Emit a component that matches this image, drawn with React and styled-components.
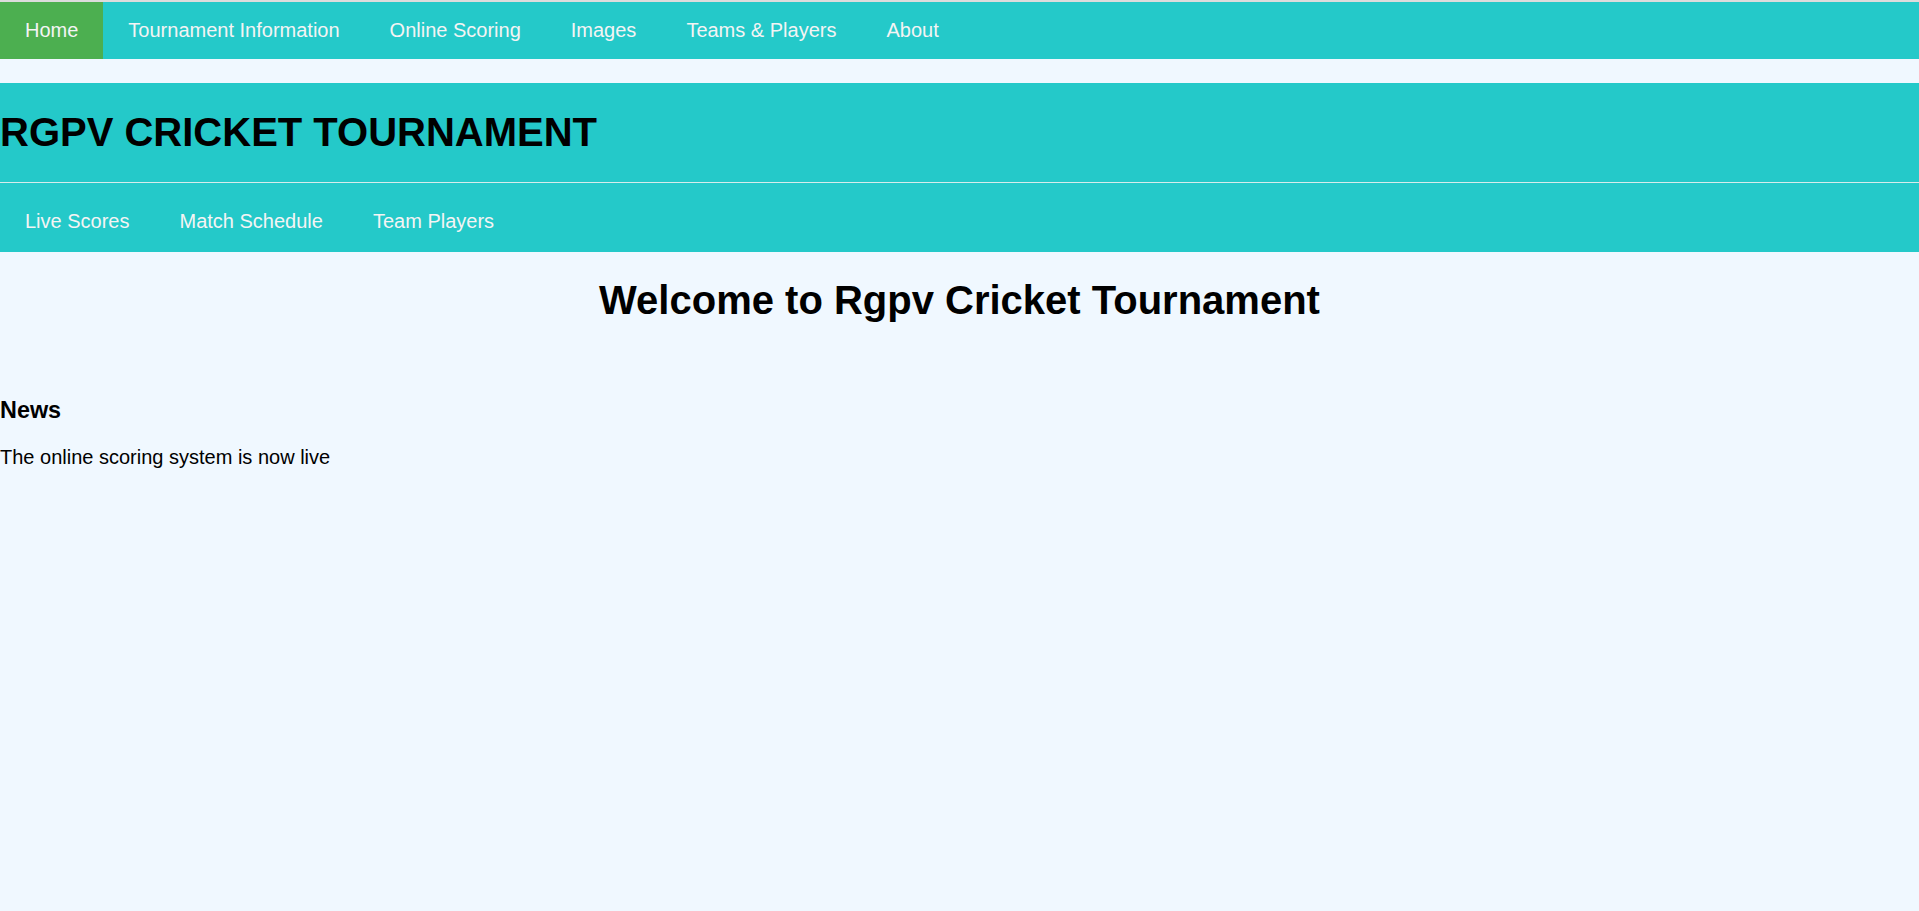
import styled, { createGlobalStyle } from "styled-components";

const GlobalStyle = createGlobalStyle`
  html, body {
    margin: 0;
    padding: 0;
    background: #f0f8ff;
    font-family: "Liberation Sans", Arial, sans-serif;
    font-size: 20px;
    color: #000;
  }
`;

const TEAL = "#24c9c9";

const Page = styled.div`
  min-height: 911px;
  border-top: 2px solid #dcdcdc;
  background: #f0f8ff;
`;

const TopNav = styled.nav`
  display: flex;
  background: ${TEAL};
`;

const NavLink = styled.a`
  display: block;
  padding: 16px 25px 17px;
  line-height: 24px;
  font-size: 20px;
  color: #f4f4f4;
  text-decoration: none;
  background: ${(p) => (p.$active ? "#4caf50" : "transparent")};
  cursor: pointer;
  &:hover {
    background: ${(p) => (p.$active ? "#4caf50" : "#1fb5b5")};
  }
`;

const Header = styled.header`
  margin-top: 24px;
  background: ${TEAL};
`;

const TitleBand = styled.div`
  padding: 26px 0 27px;
  border-bottom: 1px solid #d6ecec;
`;

const Title = styled.h1`
  margin: 0;
  font-size: 40px;
  line-height: 46px;
  font-weight: 700;
`;

const SubNav = styled.nav`
  display: flex;
  padding: 10px 0 2px;
`;

const Welcome = styled.h2`
  margin: 24px 0 0;
  text-align: center;
  font-size: 40px;
  line-height: 48px;
  font-weight: 700;
`;

const News = styled.section`
  margin-top: 73px;
`;

const NewsTitle = styled.h3`
  margin: 0;
  font-size: 23.4px;
  line-height: 27px;
  font-weight: 700;
`;

const NewsText = styled.p`
  margin: 22px 0 0;
  font-size: 20px;
  line-height: 23px;
`;

const topLinks = [
  "Home",
  "Tournament Information",
  "Online Scoring",
  "Images",
  "Teams & Players",
  "About",
];

const subLinks = ["Live Scores", "Match Schedule", "Team Players"];

export default function App() {
  return (
    <>
      <GlobalStyle />
      <Page>
        <TopNav>
          {topLinks.map((l, i) => (
            <NavLink key={l} $active={i === 0}>
              {l}
            </NavLink>
          ))}
        </TopNav>

        <Header>
          <TitleBand>
            <Title>RGPV CRICKET TOURNAMENT</Title>
          </TitleBand>
          <SubNav>
            {subLinks.map((l) => (
              <NavLink key={l}>{l}</NavLink>
            ))}
          </SubNav>
        </Header>

        <Welcome>Welcome to Rgpv Cricket Tournament</Welcome>

        <News>
          <NewsTitle>News</NewsTitle>
          <NewsText>The online scoring system is now live</NewsText>
        </News>
      </Page>
    </>
  );
}
